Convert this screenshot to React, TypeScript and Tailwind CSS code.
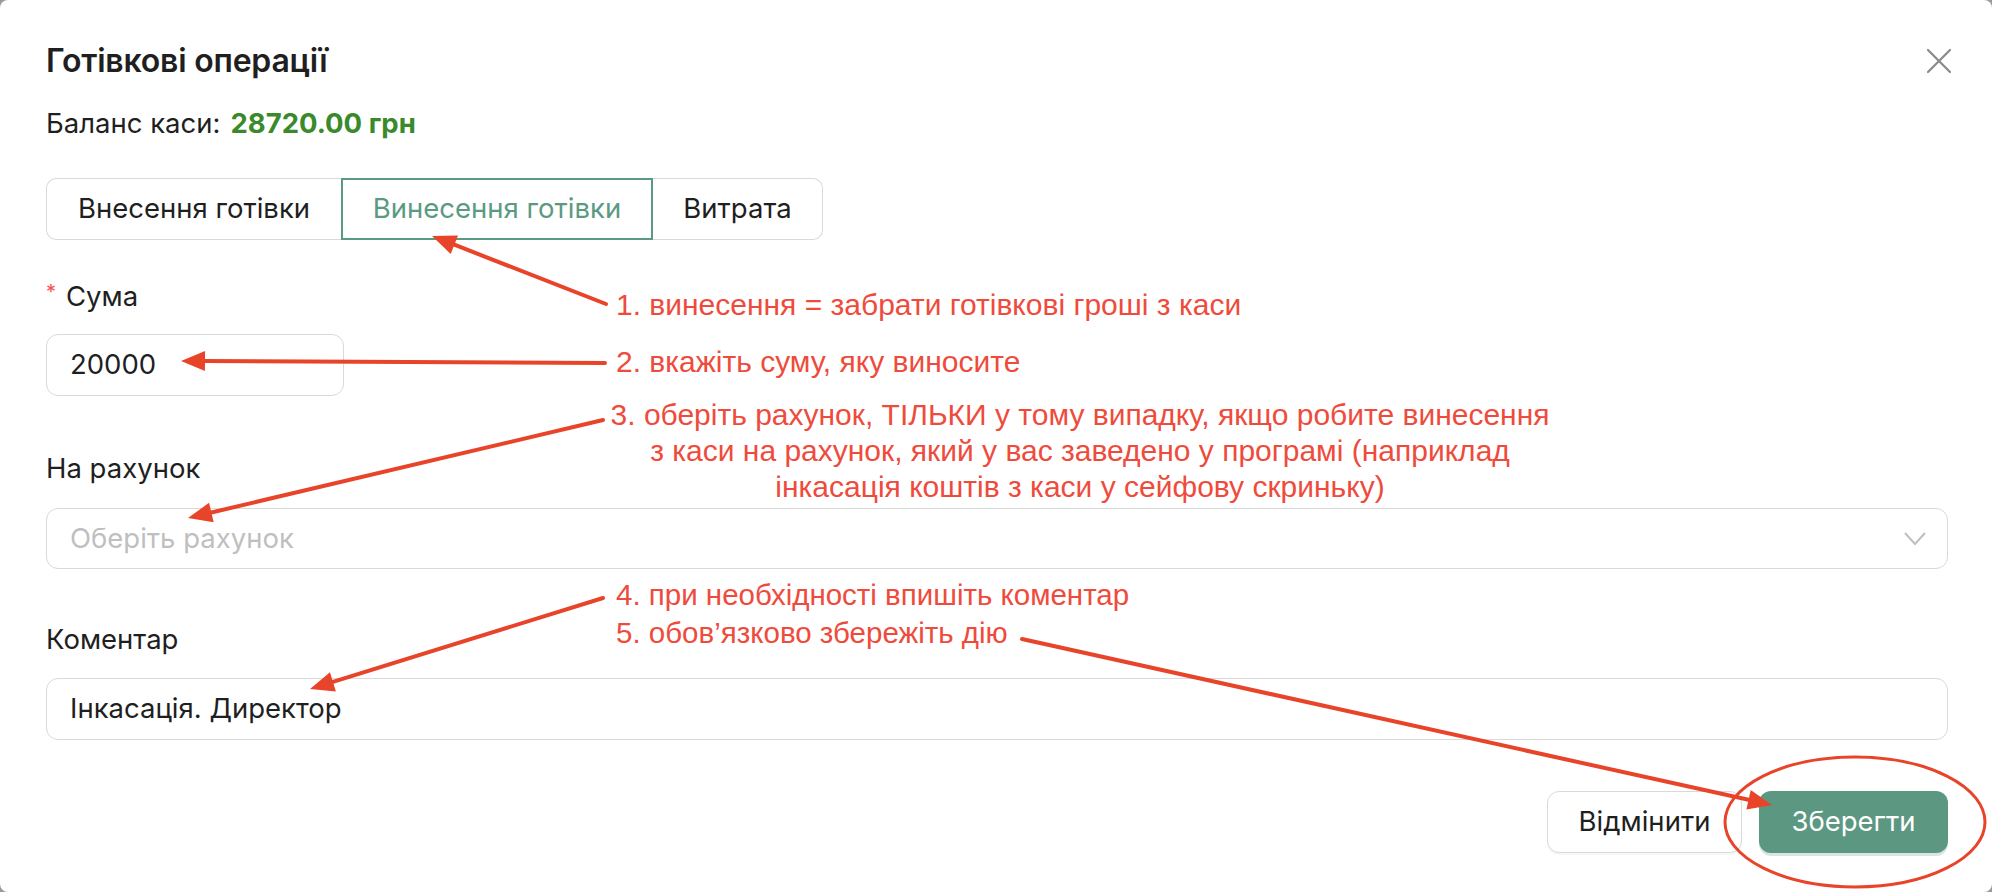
import React from "react";

const RED_LINE = "#e8442a";
const RED_TEXT = "#ef4b3c";

function Arrow({ x1, y1, x2, y2 }: { x1: number; y1: number; x2: number; y2: number }) {
  // line with a filled head at (x2, y2)
  const ang = Math.atan2(y2 - y1, x2 - x1);
  const len = 24;
  const half = 10;
  const bx = x2 - len * Math.cos(ang);
  const by = y2 - len * Math.sin(ang);
  const px = -Math.sin(ang) * half;
  const py = Math.cos(ang) * half;
  return (
    <g>
      <line x1={x1} y1={y1} x2={bx} y2={by} stroke={RED_LINE} strokeWidth={4} strokeLinecap="round" />
      <polygon points={`${x2},${y2} ${bx + px},${by + py} ${bx - px},${by - py}`} fill={RED_LINE} />
    </g>
  );
}

export default function App() {
  return (
    <div className="w-[1992px] h-[892px] overflow-hidden bg-[#9a9a9a]">
      <div className="relative w-full h-full rounded-[8px] overflow-hidden bg-white font-['Inter',sans-serif] text-[#1f1f1f]">
        <div className="pl-[46px] pr-[44px] pt-[41px]">
          {/* Header */}
          <div className="flex items-center justify-between h-[40px]">
            <h1 className="text-[32px] leading-[40px] font-semibold tracking-[-0.2px]">Готівкові операції</h1>
            <svg width="26" height="26" viewBox="0 0 26 26" className="mr-[-4px]">
              <path d="M2 2 L24 24 M24 2 L2 24" stroke="#8a8a8a" strokeWidth="2.2" strokeLinecap="round" />
            </svg>
          </div>

          <div className="mt-[25px] h-[36px] flex items-center text-[27.5px]">
            <span>Баланс каси:</span>
            <span className="ml-[10px] font-bold text-[#3a8a2b]">28720.00 грн</span>
          </div>

          {/* Tabs */}
          <div className="mt-[36px] flex h-[62px] text-[27.5px]">
            <button className="w-[295px] h-full border border-r-0 border-[#d9d9d9] rounded-l-[10px] bg-white">
              Внесення готівки
            </button>
            <button className="w-[312px] h-full border-2 border-[#5b9a82] text-[#5b9a82] bg-white">
              Винесення готівки
            </button>
            <button className="w-[170px] h-full border border-l-0 border-[#d9d9d9] rounded-r-[10px] bg-white">
              Витрата
            </button>
          </div>

          {/* Sum */}
          <div className="mt-[39px] h-[36px] flex items-center text-[27.5px]">
            <span className="text-[#ff4d4f] text-[20px] mr-[10px] -mt-[10px]">*</span>
            <span>Сума</span>
          </div>
          <div className="mt-[19px] w-[298px] h-[62px] border border-[#d9d9d9] rounded-[12px] flex items-center px-[23px] text-[27.5px]">
            20000
          </div>

          {/* Account */}
          <div className="mt-[55px] h-[36px] flex items-center text-[27.5px]">На рахунок</div>
          <div className="mt-[21px] h-[61px] border border-[#d9d9d9] rounded-[12px] flex items-center justify-between pl-[23px] pr-[21px] text-[27.5px]">
            <span className="text-[#bfbfbf]">Оберіть рахунок</span>
            <svg width="22" height="14" viewBox="0 0 22 14">
              <path d="M1 1 L11 12 L21 1" fill="none" stroke="#bfbfbf" strokeWidth="2" />
            </svg>
          </div>

          {/* Comment */}
          <div className="mt-[53px] h-[36px] flex items-center text-[27.5px]">Коментар</div>
          <div className="mt-[20px] h-[62px] border border-[#d9d9d9] rounded-[12px] flex items-center px-[23px] text-[27.5px]">
            Інкасація. Директор
          </div>

          {/* Footer */}
          <div className="mt-[51px] flex justify-end gap-[17px] text-[27.5px]">
            <button className="w-[195px] h-[62px] border border-[#d9d9d9] rounded-[12px] bg-white shadow-[0_2px_0_rgba(0,0,0,0.03)]">
              Відмінити
            </button>
            <button className="w-[189px] h-[62px] rounded-[12px] bg-[#5b9781] text-white shadow-[0_3px_0_rgba(70,120,100,0.2)]">
              Зберегти
            </button>
          </div>
        </div>

        {/* Annotation overlay */}
        <svg className="absolute inset-0 pointer-events-none" width="1992" height="892">
          <Arrow x1={606} y1={304} x2={432} y2={236} />
          <Arrow x1={605} y1={363} x2={181} y2={361} />
          <Arrow x1={603} y1={420} x2={188} y2={518} />
          <Arrow x1={603} y1={598} x2={310} y2={689} />
          <Arrow x1={1022} y1={639} x2={1772} y2={805} />
          <ellipse cx={1855} cy={822} rx={130} ry={65} fill="none" stroke={RED_LINE} strokeWidth={3} />
        </svg>

        <div className="absolute left-[616px] top-[287px] text-[30px] leading-[36px] font-['Liberation_Sans',sans-serif] text-[#ef4b3c] whitespace-nowrap">
          1. винесення = забрати готівкові гроші з каси
        </div>
        <div className="absolute left-[616px] top-[344px] text-[30px] leading-[36px] font-['Liberation_Sans',sans-serif] text-[#ef4b3c] whitespace-nowrap">
          2. вкажіть суму, яку виносите
        </div>
        <div className="absolute left-[580px] top-[397px] w-[1000px] text-center text-[30px] leading-[36px] font-['Liberation_Sans',sans-serif] text-[#ef4b3c] whitespace-nowrap">
          <div>3. оберіть рахунок, ТІЛЬКИ у тому випадку, якщо робите винесення</div>
          <div>з каси на рахунок, який у вас заведено у програмі (наприклад</div>
          <div>інкасація коштів з каси у сейфову скриньку)</div>
        </div>
        <div className="absolute left-[616px] top-[576px] text-[29.5px] leading-[38px] font-['Liberation_Sans',sans-serif] whitespace-nowrap" style={{ color: RED_TEXT }}>
          <div>4. при необхідності впишіть коментар</div>
          <div>5. обов’язково збережіть дію</div>
        </div>
      </div>
    </div>
  );
}
